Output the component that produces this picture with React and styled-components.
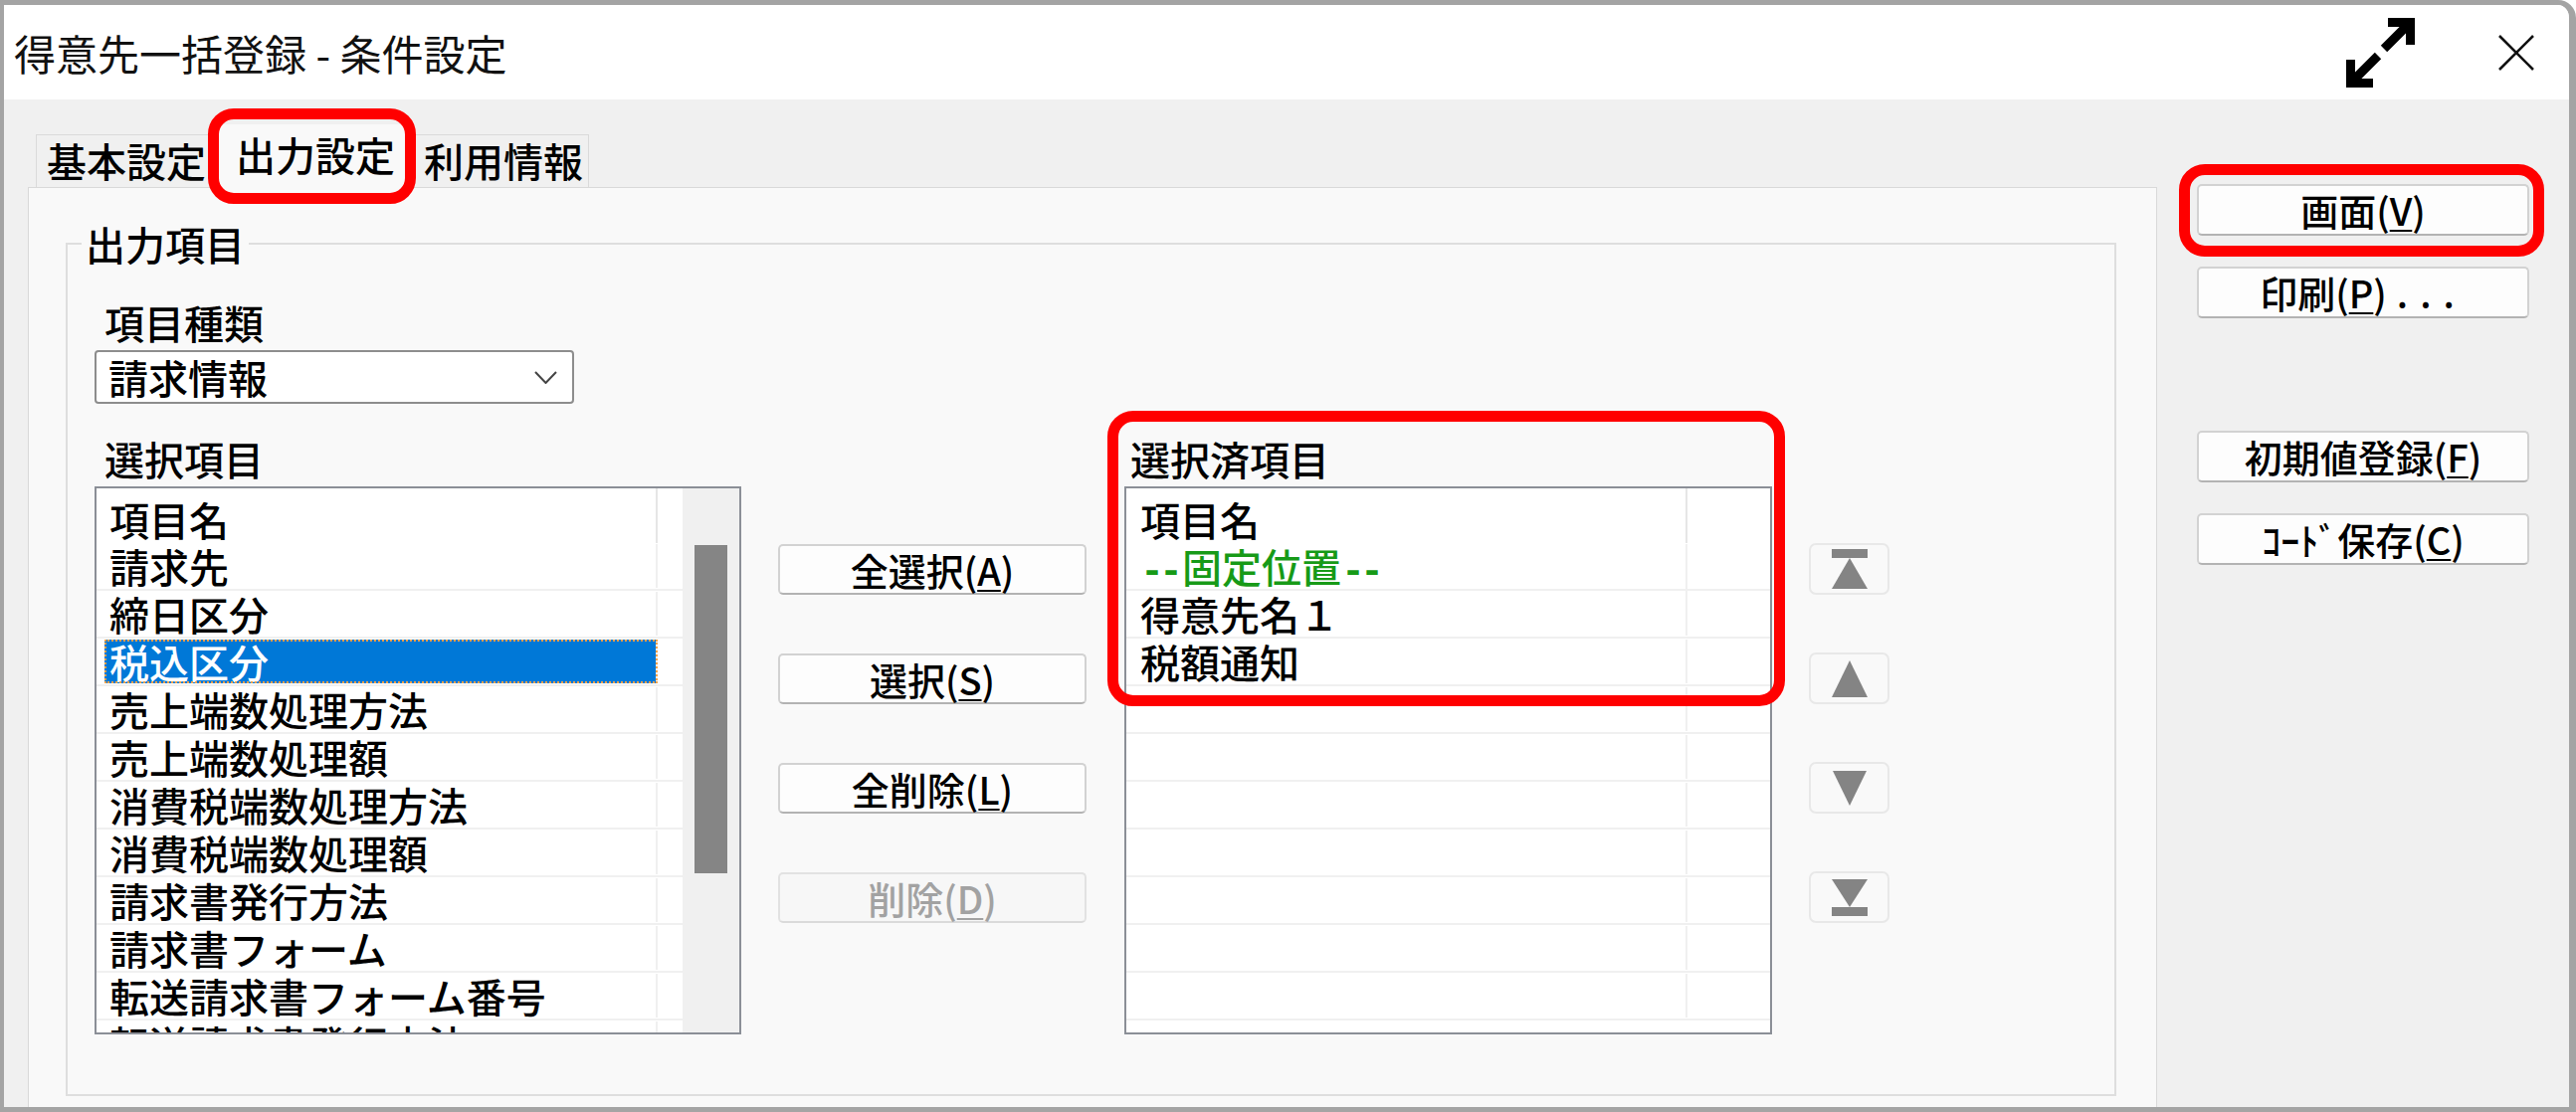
import React from "react"
import styled, { createGlobalStyle } from "styled-components"

const uiFont = `"Noto Sans CJK JP", "Noto Sans", sans-serif`

const GlobalStyle = createGlobalStyle`
  html, body {
    margin: 0;
    padding: 0;
    overflow: hidden;
    background: #ffffff;
  }
  body {
    font-family: ${uiFont};
    color: #000;
  }
  * {
    box-sizing: border-box;
  }
`

const sourceItems = [
  "請求先",
  "締日区分",
  "税込区分",
  "売上端数処理方法",
  "売上端数処理額",
  "消費税端数処理方法",
  "消費税端数処理額",
  "請求書発行方法",
  "請求書フォーム",
  "転送請求書フォーム番号",
  "転送請求書発行方法",
]

const pickedItems = ["得意先名１", "税額通知", "", "", "", "", "", "", ""]

export default function App() {
  return (
    <>
      <GlobalStyle />
      <Window>
        <TitleBar>
          <Title>得意先一括登録 - 条件設定</Title>
          <TitleControls>
            <ExpandIcon />
            <CloseIcon />
          </TitleControls>
        </TitleBar>

        <Body>
          <TabArea>
            <TabStrip>
              <Tab>基本設定</Tab>
              <Tab $active>
                出力設定
                <Marker $t={-17} $l={-8} $r={-9} $b={-16} />
              </Tab>
              <Tab $last>利用情報</Tab>
            </TabStrip>

            <TabPanel>
              <Group>
                <Legend>出力項目</Legend>
                <GroupBody>
                  <Caption>項目種類</Caption>
                  <Combo>
                    <span>請求情報</span>
                    <Chevron />
                  </Combo>

                  <Lists>
                    <ListColumn $w={650}>
                      <Caption>選択項目</Caption>
                      <ListBox>
                        <Rows>
                          <HeadRow>
                            <HeadCell>項目名</HeadCell>
                            <HeadCell $tail />
                          </HeadRow>
                          {sourceItems.map(name => (
                            <Row key={name}>
                              <NameCell $selected={name === "税込区分"}>{name}</NameCell>
                              <TailCell />
                            </Row>
                          ))}
                        </Rows>
                        <ScrollTrack>
                          <ScrollThumb />
                        </ScrollTrack>
                      </ListBox>
                    </ListColumn>

                    <MoveButtons>
                      <PushButton>
                        全選択(<u>A</u>)
                      </PushButton>
                      <PushButton>
                        選択(<u>S</u>)
                      </PushButton>
                      <PushButton>
                        全削除(<u>L</u>)
                      </PushButton>
                      <PushButton disabled>
                        削除(<u>D</u>)
                      </PushButton>
                    </MoveButtons>

                    <ListColumn $w={651} $gap={38}>
                      <Caption $indent={6}>選択済項目</Caption>
                      <ListBox>
                        <Rows>
                          <HeadRow>
                            <HeadCell $wide>項目名</HeadCell>
                            <HeadCell $tail />
                          </HeadRow>
                          <Row>
                            <NameCell $wide $fixed>
                              <Dash>--</Dash>固定位置<Dash>--</Dash>
                            </NameCell>
                            <TailCell />
                          </Row>
                          {pickedItems.map((name, i) => (
                            <Row key={i}>
                              <NameCell $wide>{name}</NameCell>
                              <TailCell />
                            </Row>
                          ))}
                        </Rows>
                      </ListBox>
                      <Marker $t={-28} $l={-17} $r={-13} $b={330} />
                    </ListColumn>

                    <OrderButtons>
                      <OrderButton>
                        <OrderIcon kind="top" />
                      </OrderButton>
                      <OrderButton>
                        <OrderIcon kind="up" />
                      </OrderButton>
                      <OrderButton>
                        <OrderIcon kind="down" />
                      </OrderButton>
                      <OrderButton>
                        <OrderIcon kind="bottom" />
                      </OrderButton>
                    </OrderButtons>
                  </Lists>
                </GroupBody>
              </Group>
            </TabPanel>
          </TabArea>

          <SideButtons>
            <SideButton>
              画面(<u>V</u>)
              <Marker $t={-22} $l={-20} $r={-17} $b={-23} />
            </SideButton>
            <SideButton>
              印刷(<u>P</u>)<Dots>...</Dots>
            </SideButton>
            <SideButton $space={113}>
              初期値登録(<u>F</u>)
            </SideButton>
            <SideButton>
              ｺｰﾄﾞ保存(<u>C</u>)
            </SideButton>
          </SideButtons>
        </Body>
      </Window>
    </>
  )
}

const ExpandIcon = () => (
  <svg width="70" height="70" viewBox="0 0 70 70" fill="none" stroke="#000" strokeWidth="9">
    <path d="M42 4.5H64.5V27" strokeLinejoin="miter" />
    <path d="M64.5 4.5L38 31" />
    <path d="M32 38L4.5 65.5" />
    <path d="M4.5 42V65.5H27" strokeLinejoin="miter" />
  </svg>
)

const CloseIcon = () => (
  <svg width="36" height="36" viewBox="0 0 36 36" stroke="#111" strokeWidth="2.6">
    <path d="M1 1L35 35M35 1L1 35" />
  </svg>
)

const Chevron = () => (
  <svg width="23" height="13" viewBox="0 0 23 13" fill="none" stroke="#444" strokeWidth="2">
    <path d="M1 1L11.5 12L22 1" />
  </svg>
)

const OrderIcon = ({ kind }) => {
  if (kind === "top")
    return (
      <IconSvg width="36" height="40" viewBox="0 0 36 40">
        <rect x="0" y="0" width="36" height="9" />
        <polygon points="18,9 36,40 0,40" />
      </IconSvg>
    )
  if (kind === "up")
    return (
      <IconSvg width="36" height="37" viewBox="0 0 36 37">
        <polygon points="18,0 36,37 0,37" />
      </IconSvg>
    )
  if (kind === "down")
    return (
      <IconSvg width="34" height="35" viewBox="0 0 34 35">
        <polygon points="0,0 34,0 17,35" />
      </IconSvg>
    )
  return (
    <IconSvg width="36" height="37" viewBox="0 0 36 37">
      <polygon points="0,0 36,0 18,28" />
      <rect x="0" y="28" width="36" height="9" />
    </IconSvg>
  )
}

const Window = styled.div`
  width: 2589px;
  height: 1118px;
  display: flex;
  flex-direction: column;
  border: 5px solid #a4a4a4;
  border-left-width: 4px;
  border-right-width: 7px;
  border-top-right-radius: 18px;
  background: #f0f0f0;
  overflow: hidden;
  font-family: ${uiFont};
  font-weight: 500;
`

const TitleBar = styled.div`
  flex: none;
  height: 95px;
  display: flex;
  align-items: center;
  padding-left: 10px;
  background: #ffffff;
`

const Title = styled.div`
  flex: 1;
  font-size: 42px;
  font-weight: 400;
  line-height: 1;
  color: #111;
  white-space: nowrap;
`

const TitleControls = styled.div`
  display: flex;
  align-items: center;
  gap: 83px;
  margin-right: 35px;
`

const Body = styled.div`
  flex: 1;
  min-height: 0;
  display: flex;
`

const TabArea = styled.div`
  width: 2140px;
  margin-left: 24px;
  padding-top: 25px;
  display: flex;
  flex-direction: column;
`

const TabStrip = styled.div`
  display: flex;
  align-items: flex-end;
  padding-left: 8px;
  position: relative;
  z-index: 1;
`

const Tab = styled.div`
  position: relative;
  height: ${p => (p.$active ? 64 : 53)}px;
  margin-bottom: ${p => (p.$active ? -1 : 0)}px;
  padding: ${p => (p.$active ? "3px 12px 0 20px" : p.$last ? "0 5px 0 15px" : "0 8px 0 10px")};
  border: 1px solid ${p => (p.$active ? "#f9f9f9" : "#dadada")};
  border-bottom: none;
  background: ${p => (p.$active ? "#f9f9f9" : "#f0f0f0")};
  font-size: 40px;
  line-height: ${p => (p.$active ? 52 : 51)}px;
  white-space: nowrap;
`

const TabPanel = styled.div`
  flex: 1;
  display: flex;
  flex-direction: column;
  border: 1px solid #d9d9d9;
  border-bottom: none;
  background: #f9f9f9;
`

const Group = styled.fieldset`
  flex: 1;
  min-width: 0;
  margin: 36px 40px 11px 37px;
  padding: 0;
  border: 2px solid #dedede;
`

const Legend = styled.legend`
  margin-left: 14px;
  padding: 0 4px;
  font-size: 40px;
  line-height: 40px;
`

const GroupBody = styled.div`
  padding: 39px 0 0 27px;
`

const Caption = styled.div`
  padding-left: ${p => p.$indent ?? 10}px;
  font-size: 40px;
  line-height: 40px;
  white-space: nowrap;
`

const Combo = styled.div`
  width: 482px;
  height: 54px;
  margin-top: 8px;
  display: flex;
  align-items: center;
  justify-content: space-between;
  padding: 0 15px 0 12px;
  border: 2px solid #8d8d8d;
  border-radius: 4px;
  background: #ffffff;
  font-size: 40px;
  line-height: 1;
`

const Lists = styled.div`
  display: flex;
  align-items: flex-start;
  margin-top: 35px;
`

const ListColumn = styled.div`
  position: relative;
  flex: none;
  width: ${p => p.$w}px;
  margin-left: ${p => p.$gap ?? 0}px;
`

const ListBox = styled.div`
  height: 551px;
  margin-top: 8px;
  display: flex;
  border: 2px solid #8b8f97;
  background: #ffffff;
  overflow: hidden;
`

const Rows = styled.div`
  flex: 1;
  display: flex;
  flex-direction: column;
`

const HeadRow = styled.div`
  flex: none;
  height: 55px;
  display: grid;
  grid-template-columns: 564px 1fr;
`

const HeadCell = styled.div`
  padding: 8px 0 0 ${p => (p.$wide ? 14 : 13)}px;
  border-right: ${p => (p.$tail ? "none" : "2px solid #e6e6e6")};
  font-size: 40px;
  line-height: 47px;
  white-space: nowrap;
`

const Row = styled.div`
  flex: none;
  height: 48px;
  display: grid;
  grid-template-columns: 564px 1fr;
  border-bottom: 2px solid #f0f0f0;
`

const NameCell = styled.div`
  margin: 1px 0 1px ${p => (p.$wide ? 0 : 8)}px;
  padding-left: ${p => (p.$wide ? 14 : 5)}px;
  border-right: 2px solid #f0f0f0;
  font-size: 40px;
  line-height: 44px;
  white-space: nowrap;
  color: ${p => (p.$selected ? "#ffffff" : p.$fixed ? "#179a17" : "#000")};
  background: ${p => (p.$selected ? "#0078d7" : "transparent")};
  outline: ${p => (p.$selected ? "2px dotted #f3a24a" : "none")};
  outline-offset: -2px;
`

const TailCell = styled.div``

const Dash = styled.span`
  font-family: "Liberation Mono", monospace;
  font-weight: 700;
  letter-spacing: -5px;
  margin-right: 4px;
`

const ScrollTrack = styled.div`
  flex: none;
  width: 57px;
  padding: 57px 0 0 12px;
  background: #f0f0f0;
`

const ScrollThumb = styled.div`
  width: 33px;
  height: 330px;
  background: #858585;
`

const MoveButtons = styled.div`
  flex: none;
  width: 310px;
  margin-left: 37px;
  padding-top: 106px;
  display: flex;
  flex-direction: column;
  gap: 59px;
`

const PushButton = styled.div`
  position: relative;
  height: 51px;
  display: flex;
  align-items: center;
  justify-content: center;
  border: 2px solid ${p => (p.disabled ? "#e2e2e2" : "#d2d2d2")};
  border-bottom-color: ${p => (p.disabled ? "#dadada" : "#b3b3b3")};
  border-radius: 5px;
  background: ${p => (p.disabled ? "#f7f7f7" : "#fdfdfd")};
  color: ${p => (p.disabled ? "#a2a2a2" : "#000")};
  font-size: 38px;
  line-height: 1;
  white-space: nowrap;

  u {
    text-decoration-thickness: 2px;
    text-underline-offset: 4px;
  }
`

const SideButton = styled(PushButton)`
  height: 52px;
  margin-top: ${p => p.$space ?? 31}px;

  &:first-child {
    margin-top: 0;
  }
`

const Dots = styled.span`
  margin-left: 10px;
  letter-spacing: 12px;
`

const OrderButtons = styled.div`
  flex: none;
  width: 81px;
  margin-left: 37px;
  padding-top: 105px;
  display: flex;
  flex-direction: column;
  gap: 58px;
`

const OrderButton = styled.div`
  height: 52px;
  display: flex;
  align-items: center;
  justify-content: center;
  border: 2px solid #e8e8e8;
  border-radius: 7px;
  background: #f9f9f9;
`

const IconSvg = styled.svg`
  fill: #848484;
  filter: blur(0.7px);
`

const SideButtons = styled.div`
  flex: none;
  width: 334px;
  margin-left: 40px;
  padding-top: 85px;
  display: flex;
  flex-direction: column;
`

const Marker = styled.span`
  position: absolute;
  top: ${p => p.$t}px;
  left: ${p => p.$l}px;
  right: ${p => p.$r}px;
  bottom: ${p => p.$b}px;
  border: 11px solid #ff0000;
  border-radius: 26px;
  pointer-events: none;
  z-index: 3;
`
